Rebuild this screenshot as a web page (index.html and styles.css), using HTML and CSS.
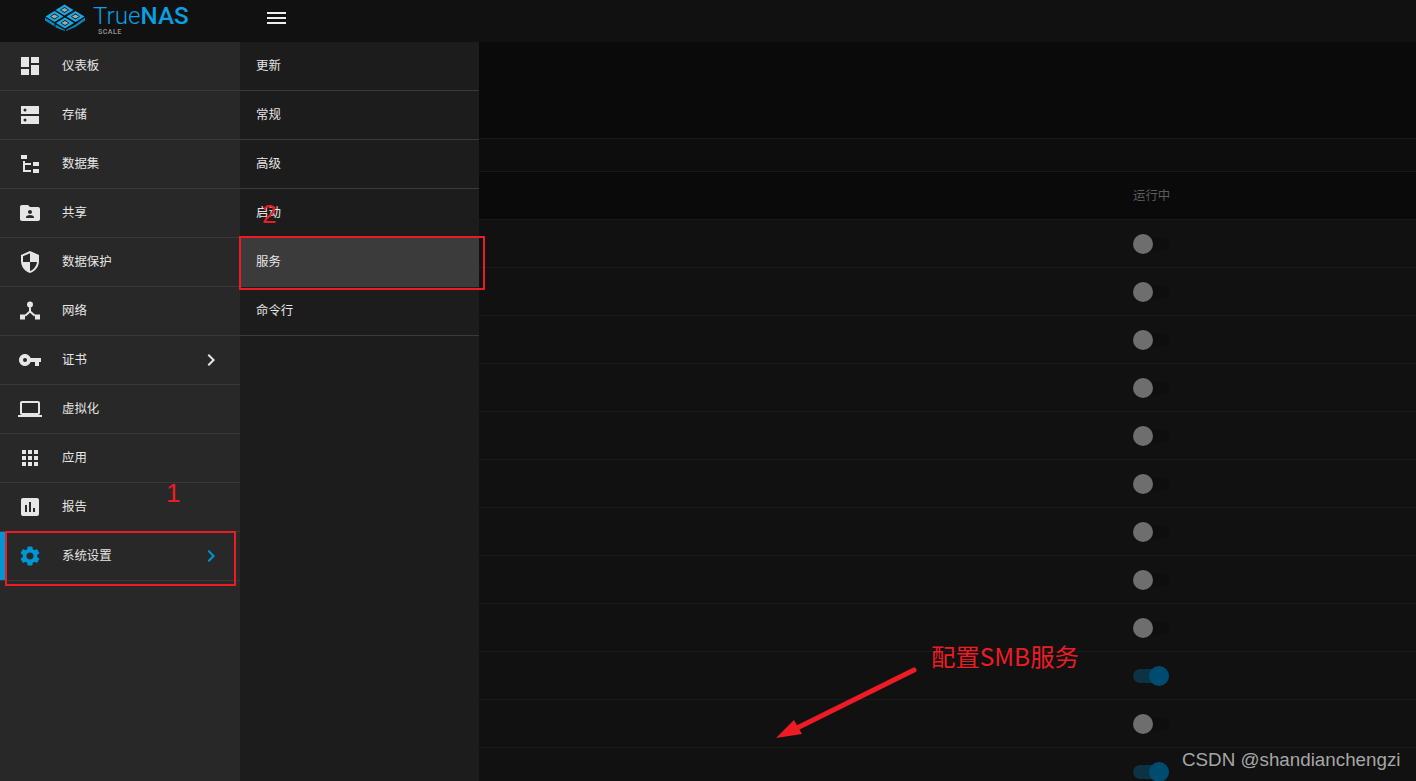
FILE: index.html
```html
<!DOCTYPE html>
<html lang="zh-CN">
<head>
  <meta charset="UTF-8">
  <meta name="viewport" content="width=device-width, initial-scale=1.0">
  <title>TrueNAS SCALE</title>
  <link rel="stylesheet" href="styles.css">
</head>
<body>
  <div class="app">
    <header class="topbar">
      <div class="brand">
        <svg class="brand-mark" viewBox="0 0 40 28" width="40" height="28">
          <g fill="#0a86bd">
            <polygon points="0,14.500 9.500,20.500 9.500,23.500 0,17.500"/>
            <polygon points="10.500,21.500 20,27 20,28 10.500,24.500"/>
            <polygon points="21,27 30.500,21.500 40,14.500 40,17.500 30.500,24 21,28"/>
          </g>
          <g fill="#16a8e6">
            <polygon points="19.500,1.500 28.500,7 19.500,12.500 10.500,7"/>
            <polygon points="9.500,8 18.500,13.500 9.500,19 0.500,13.500"/>
            <polygon points="30.500,8 39.500,13.500 30.500,19 21.500,13.500"/>
            <polygon points="20,14.500 29,20 20,25.500 11,20"/>
          </g>
          <g fill="#111">
            <polygon points="19.500,4 24,7 19.500,10 15,7"/>
            <polygon points="9.500,10.500 14,13.500 9.500,16.500 5,13.500"/>
            <polygon points="30.500,10.500 35,13.500 30.500,16.500 26,13.500"/>
            <polygon points="20,17 24.500,20 20,23 15.500,20"/>
          </g>
          <g fill="#a8a8a8">
            <polygon points="19.500,5 23,7 19.500,9 16,7"/>
            <polygon points="9.500,11.500 13,13.500 9.500,15.500 6,13.500"/>
            <polygon points="30.500,11.500 34,13.500 30.500,15.500 27,13.500"/>
            <polygon points="20,18 23.500,20 20,22 16.500,20"/>
          </g>
        </svg>
        <div class="brand-name">
          <span class="brand-text">True<b>NAS</b></span>
          <span class="brand-sub">SCALE</span>
        </div>
      </div>
      <div class="menu-btn">
        <span></span><span></span><span></span>
      </div>
    </header>

    <div class="layout">
      <nav class="sidenav">
        <a class="nav-item">
          <svg class="nav-icon" viewBox="0 0 24 24"><path d="M3 13h8V3H3v10zm0 8h8v-6H3v6zm10 0h8V11h-8v10zm0-18v6h8V3h-8z"/></svg>
          <span>仪表板</span>
        </a>
        <a class="nav-item">
          <svg class="nav-icon" viewBox="0 0 24 24"><path fill-rule="evenodd" d="M3 3h18v8H3zM3 13h18v8H3zM5.500 7a1.500 1.500 0 1 0 3 0 1.500 1.500 0 1 0-3 0zM5.500 17a1.500 1.500 0 1 0 3 0 1.500 1.500 0 1 0-3 0z"/></svg>
          <span>存储</span>
        </a>
        <a class="nav-item">
          <svg class="nav-icon" viewBox="0 0 24 24"><path d="M3 3h6v4H3V3m12 7h6v4h-6v-4m0 7h6v4h-6v-4m-2-4H7v5h6v2H5V9h2v2h6v2z"/></svg>
          <span>数据集</span>
        </a>
        <a class="nav-item">
          <svg class="nav-icon" viewBox="0 0 24 24"><path d="M20 6h-8l-2-2H4c-1.100 0-1.990.9-1.990 2L2 18c0 1.100.9 2 2 2h16c1.100 0 2-.9 2-2V8c0-1.100-.9-2-2-2zm-8 3c1.100 0 2 .9 2 2s-.9 2-2 2-2-.9-2-2 .9-2 2-2zm4 8H8v-1c0-1.330 2.670-2 4-2s4 .67 4 2v1z"/></svg>
          <span>共享</span>
        </a>
        <a class="nav-item">
          <svg class="nav-icon" viewBox="0 0 24 24"><path d="M12 1L3 5v6c0 5.550 3.840 10.740 9 12 5.160-1.260 9-6.450 9-12V5l-9-4zm0 10.990h7c-.53 4.120-3.280 7.790-7 8.940V12H5V6.300l7-3.110v8.800z"/></svg>
          <span>数据保护</span>
        </a>
        <a class="nav-item">
          <svg class="nav-icon" viewBox="0 0 24 24"><path d="M12 2.500a3 3 0 1 1 0 6 3 3 0 0 1 0-6zM11 8h2v4l4.500 4-1.400 1.400L12 13.700l-4.100 3.700L6.500 16l4.500-4zM2 15.500h5v5H2zM17 15.500h5v5h-5z"/></svg>
          <span>网络</span>
        </a>
        <a class="nav-item">
          <svg class="nav-icon" viewBox="0 0 24 24"><path d="M12.650 10C11.830 7.670 9.610 6 7 6c-3.310 0-6 2.690-6 6s2.690 6 6 6c2.610 0 4.830-1.670 5.650-4H17v4h4v-4h2v-4H12.650zM7 14c-1.100 0-2-.9-2-2s.9-2 2-2 2 .9 2 2-.9 2-2 2z"/></svg>
          <span>证书</span>
          <svg class="nav-arrow" viewBox="0 0 24 24"><path d="M10 6L8.590 7.410 13.170 12l-4.580 4.590L10 18l6-6z"/></svg>
        </a>
        <a class="nav-item">
          <svg class="nav-icon" viewBox="0 0 24 24"><path d="M20 18c1.100 0 1.990-.9 1.990-2L22 6c0-1.100-.9-2-2-2H4c-1.100 0-2 .9-2 2v10c0 1.100.9 2 2 2H0v2h24v-2h-4zM4 6h16v10H4V6z"/></svg>
          <span>虚拟化</span>
        </a>
        <a class="nav-item">
          <svg class="nav-icon" viewBox="0 0 24 24"><path d="M4 8h4V4H4v4zm6 12h4v-4h-4v4zm-6 0h4v-4H4v4zm0-6h4v-4H4v4zm6 0h4v-4h-4v4zm6-10v4h4V4h-4zm-6 4h4V4h-4v4zm6 6h4v-4h-4v4zm0 6h4v-4h-4v4z"/></svg>
          <span>应用</span>
        </a>
        <a class="nav-item">
          <svg class="nav-icon" viewBox="0 0 24 24"><path d="M19 3H5c-1.100 0-2 .9-2 2v14c0 1.100.9 2 2 2h14c1.100 0 2-.9 2-2V5c0-1.100-.9-2-2-2zM9 17H7v-7h2v7zm4 0h-2V7h2v10zm4 0h-2v-4h2v4z"/></svg>
          <span>报告</span>
        </a>
        <a class="nav-item active">
          <svg class="nav-icon" viewBox="0 0 24 24"><path d="M19.140 12.940c.04-.3.06-.61.06-.94 0-.32-.02-.64-.07-.94l2.030-1.580c.18-.14.23-.41.12-.61l-1.920-3.320c-.12-.22-.37-.29-.59-.22l-2.390.96c-.5-.38-1.030-.7-1.620-.94l-.36-2.540c-.04-.24-.24-.41-.48-.41h-3.840c-.24 0-.43.17-.47.41l-.36 2.540c-.59.24-1.130.57-1.620.94l-2.390-.96c-.22-.08-.47 0-.59.22L2.740 8.870c-.12.21-.08.47.12.61l2.030 1.580c-.05.3-.09.63-.09.94s.02.64.07.94l-2.030 1.580c-.18.14-.23.41-.12.61l1.920 3.320c.12.22.37.29.59.22l2.390-.96c.5.38 1.030.7 1.620.94l.36 2.540c.05.24.24.41.48.41h3.840c.24 0 .44-.17.47-.41l.36-2.540c.59-.24 1.130-.56 1.620-.94l2.390.96c.22.08.47 0 .59-.22l1.920-3.320c.12-.22.07-.47-.12-.61l-2.010-1.580zM12 15.600c-1.980 0-3.600-1.620-3.600-3.600s1.620-3.600 3.600-3.600 3.600 1.620 3.600 3.600-1.620 3.600-3.600 3.600z"/></svg>
          <span>系统设置</span>
          <svg class="nav-arrow" viewBox="0 0 24 24"><path d="M10 6L8.590 7.410 13.170 12l-4.580 4.590L10 18l6-6z"/></svg>
        </a>
      </nav>

      <div class="submenu">
        <a class="sub-item"><span>更新</span></a>
        <a class="sub-item"><span>常规</span></a>
        <a class="sub-item"><span>高级</span></a>
        <a class="sub-item"><span>启动</span></a>
        <a class="sub-item selected"><span>服务</span></a>
        <a class="sub-item"><span>命令行</span></a>
      </div>

      <main class="main">
        <div class="page-title"></div>
        <div class="toolbar"></div>
        <div class="table-head">运行中</div>
        <div class="row"><span class="toggle"></span></div>
        <div class="row"><span class="toggle"></span></div>
        <div class="row"><span class="toggle"></span></div>
        <div class="row"><span class="toggle"></span></div>
        <div class="row"><span class="toggle"></span></div>
        <div class="row"><span class="toggle"></span></div>
        <div class="row"><span class="toggle"></span></div>
        <div class="row"><span class="toggle"></span></div>
        <div class="row"><span class="toggle"></span></div>
        <div class="row"><span class="toggle on"></span></div>
        <div class="row"><span class="toggle"></span></div>
        <div class="row"><span class="toggle on"></span></div>
      </main>
    </div>
  </div>

  <!-- screenshot annotations -->
  <div class="mark-box mark-system"></div>
  <div class="mark-box mark-service"></div>
  <span class="mark-num mark-one">1</span>
  <span class="mark-num mark-two">2</span>
  <span class="mark-note">配置SMB服务</span>
  <svg class="mark-arrow" viewBox="0 0 150 80" width="150" height="80">
    <line x1="141" y1="7" x2="18" y2="68" stroke="#ed1c24" stroke-width="5" stroke-linecap="round"/>
    <polygon points="3,75 21,57 29,71" fill="#ed1c24"/>
  </svg>
  <span class="watermark">CSDN @shandianchengzi</span>
</body>
</html>
```

FILE: styles.css
```css
* {
  margin: 0;
  padding: 0;
  box-sizing: border-box;
}
html, body {
  height: 100%;
  overflow: hidden;
}
body {
  background-color: #111;
  font-family: "Noto Sans CJK SC", "Liberation Sans", sans-serif;
  font-size: 12.4px;
  color: #e6e6e6;
}
.app {
  display: flex;
  flex-direction: column;
  height: 781px;
}

/* top bar */
.topbar {
  display: flex;
  height: 42px;
  background-color: #111;
}
.brand {
  display: flex;
  align-items: flex-start;
  gap: 8px;
  width: 240px;
  height: 42px;
  padding: 3px 0 0 45px;
}
.brand-mark {
  display: block;
}
.brand-name {
  display: flex;
  flex-direction: column;
  font-family: Roboto, "Liberation Sans", sans-serif;
}
.brand-text {
  font-size: 24.200px;
  font-weight: 300;
  line-height: 26px;
  color: #0a9fe0;
}
.brand-text b {
  font-weight: 500;
}
.brand-sub {
  margin-left: 5px;
  font-size: 7px;
  font-weight: 500;
  line-height: 7px;
  letter-spacing: 0.5px;
  color: #999;
}
.menu-btn {
  display: flex;
  flex-direction: column;
  gap: 3px;
  margin: 12px 0 0 27px;
}
.menu-btn span {
  display: block;
  width: 19px;
  height: 2px;
  background-color: #eee;
}

.layout {
  display: flex;
  flex: 1;
  min-height: 0;
}

/* left navigation */
.sidenav {
  width: 240px;
  background-color: #282828;
}
.nav-item {
  display: flex;
  align-items: center;
  height: 49px;
  padding-left: 18px;
  border-bottom: 1px solid #383838;
}
.nav-item span,
.sub-item span {
  margin-bottom: 2px;
}
.nav-icon {
  width: 24px;
  height: 24px;
  margin-right: 20px;
  fill: #e6e6e6;
  flex-shrink: 0;
}
.nav-arrow {
  width: 24px;
  height: 24px;
  margin-left: auto;
  margin-right: 17px;
  fill: #e6e6e6;
}
.nav-item.active {
  box-shadow: inset 5px 0 0 #0095d5;
}
.nav-item.active .nav-icon,
.nav-item.active .nav-arrow {
  fill: #0095d5;
}

/* second level menu */
.submenu {
  width: 239px;
  background-color: #1c1c1c;
}
.sub-item {
  display: flex;
  align-items: center;
  height: 49px;
  padding-left: 16px;
  border-bottom: 1px solid #3a3a3a;
}
.sub-item.selected {
  background-color: #3b3b3b;
  border-bottom-color: #3b3b3b;
}

/* dimmed services table */
.main {
  flex: 1;
  min-width: 0;
  overflow: hidden;
}
.page-title {
  height: 97px;
  background-color: #0a0a0a;
  border-bottom: 1px solid #191919;
}
.toolbar {
  height: 33px;
  background-color: #0d0d0d;
  border-bottom: 1px solid #191919;
}
.table-head {
  display: flex;
  align-items: center;
  height: 48px;
  padding-left: 654px;
  padding-bottom: 2px;
  background-color: #0a0a0a;
  border-bottom: 1px solid #1a1a1a;
  color: #5c5c5c;
}
.row {
  display: flex;
  align-items: center;
  height: 48px;
  padding-left: 654px;
  background-color: #111;
  border-bottom: 1px solid #1a1a1a;
}
.toggle {
  position: relative;
  display: block;
  width: 36px;
  height: 14px;
  border-radius: 7px;
  background-color: #0e0e0e;
}
.toggle::after {
  content: "";
  position: absolute;
  left: 0;
  top: -3px;
  width: 20px;
  height: 20px;
  border-radius: 50%;
  background-color: #6e6e6e;
}
.toggle.on {
  background-color: #0b3345;
}
.toggle.on::after {
  left: 16px;
  background-color: #004b70;
}

/* red marks drawn over the screenshot */
.mark-box {
  position: absolute;
  border: 2px solid #ed1c24;
}
.mark-system {
  left: 5px;
  top: 531px;
  width: 231px;
  height: 55px;
}
.mark-service {
  left: 239px;
  top: 236px;
  width: 246px;
  height: 54px;
}
.mark-num {
  position: absolute;
  font-family: "Liberation Sans", sans-serif;
  font-size: 26px;
  line-height: 26px;
  color: #ed1c24;
}
.mark-one {
  left: 166px;
  top: 480px;
}
.mark-two {
  left: 262px;
  top: 201px;
}
.mark-note {
  position: absolute;
  left: 931px;
  top: 639px;
  font-size: 24.400px;
  line-height: 34px;
  color: #ed1c24;
}
.mark-arrow {
  position: absolute;
  left: 773px;
  top: 663px;
}
.watermark {
  position: absolute;
  left: 1182px;
  top: 749px;
  font-family: "Liberation Sans", sans-serif;
  font-size: 18.800px;
  line-height: 22px;
  color: #a6a6a6;
}
```
